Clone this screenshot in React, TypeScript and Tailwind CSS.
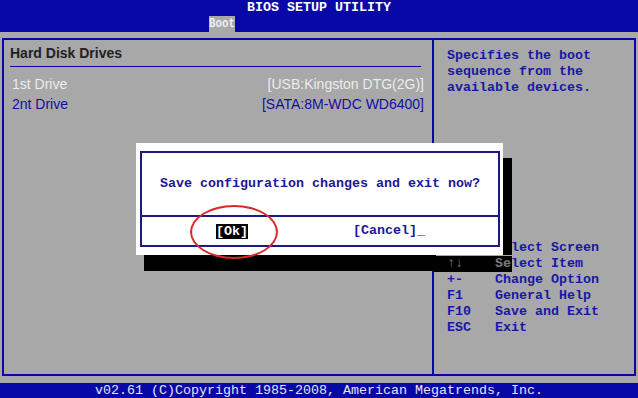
import React from "react";

const mono = "font-['Liberation_Mono','DejaVu_Sans_Mono',monospace] text-[13.33px] leading-[16px] font-bold";
const sans = "font-['Liberation_Sans','Arial',sans-serif]";

const keys = [
  { k: "←→", d: "Select Screen" },
  { k: "+-", d: "Change Option" },
  { k: "F1", d: "General Help" },
  { k: "F10", d: "Save and Exit" },
  { k: "ESC", d: "Exit" },
];

export default function App() {
  return (
    <div className="relative w-[638px] h-[398px] overflow-hidden bg-[#a8a8a8]">
      {/* Title bar */}
      <div className="h-[32px] bg-[#0808a8] flex flex-col">
        <div className={`${mono} h-[16px] text-white text-center`}>BIOS SETUP UTILITY</div>
        <div className="ml-[209px] h-[16px] w-[26px] overflow-hidden bg-[#a8a8a8] flex">
          <span className={`${mono} block scale-x-[0.81] origin-left text-[#eeeeff]`}>Boot</span>
        </div>
      </div>

      {/* Main area */}
      <div className="h-[351px] pt-[6px] px-[2px]">
        <div className="h-[338px] border-2 border-[#0808a8] flex">
          {/* Left panel */}
          <div className="w-[430px] border-r-2 border-[#0808a8] pl-[6px] pr-[8px] pt-[3px]">
            <div className={`${sans} text-[14px] font-bold text-[#222222] h-[20px] leading-[20px]`}>Hard Disk Drives</div>
            <div className="mt-[3px] mr-[3px] h-[1px] bg-[#0808a8]" />
            <div className={`${sans} text-[14px] mt-[7px] flex justify-between text-[#ececec] leading-[20px] pl-[2px]`}>
              <span>1st Drive</span>
              <span>[USB:Kingston DTG(2G)]</span>
            </div>
            <div className={`${sans} text-[14px] flex justify-between text-[#1010a0] leading-[20px] pl-[2px]`}>
              <span>2nt Drive</span>
              <span>[SATA:8M-WDC WD6400]</span>
            </div>
          </div>

          {/* Right panel */}
          <div className={`flex-1 pt-[8px] flex flex-col ${mono} text-[#1818a0]`}>
            <div className="pl-[13px]">Specifies the boot</div>
            <div className="pl-[13px]">sequence from the</div>
            <div className="pl-[13px]">available devices.</div>
            <div className="mt-[144px]">
              <div className="flex pl-[13px]">
                <span className="w-[48px]">{keys[0].k}</span>
                <span>{keys[0].d}</span>
              </div>
              {/* row under the dialog shadow */}
              <div className="flex">
                <span className="w-[61px] pl-[13px] bg-black text-[#7a7a7a]">↑↓</span>
                <span className="w-[17px] bg-black text-[#7a7a7a]">Se</span>
                <span className="-ml-[1px]">lect Item</span>
              </div>
              {keys.slice(1).map((r) => (
                <div key={r.k} className="flex pl-[13px]">
                  <span className="w-[48px]">{r.k}</span>
                  <span>{r.d}</span>
                </div>
              ))}
            </div>
          </div>
        </div>
      </div>

      {/* Footer */}
      <div className={`h-[15px] bg-[#0808a8] text-center ${mono} font-normal leading-[15px] text-[#e4e4f0]`}>
        v02.61 (C)Copyright 1985-2008, American Megatrends, Inc.
      </div>

      {/* Dialog shadow */}
      <div className="absolute left-[144px] top-[255px] w-[292px] h-[16px] bg-black" />
      <div className="absolute left-[503px] top-[158px] w-[9px] h-[97px] bg-black" />

      {/* Dialog */}
      <div className="absolute left-[136px] top-[143px] w-[367px] h-[112px] bg-white pt-[8px] pl-[4px]">
        <div className="w-[360px] h-[96px] border-2 border-[#1a1a80] flex flex-col">
          <div className={`h-[62px] flex items-center justify-center ${mono} text-[#1818a0]`}>
            Save configuration changes and exit now?
          </div>
          <div className="h-[2px] bg-[#1a1a80]" />
          <div className={`flex-1 flex items-center ${mono} text-[#1818a0]`}>
            <span className="ml-[74px] bg-black text-white h-[15px] leading-[15px]">[Ok]</span>
            <span className="ml-[105px]">[Cancel]_</span>
          </div>
        </div>
      </div>

      {/* Red marker circle */}
      <div className="absolute left-[190px] top-[205px] w-[88px] h-[54px] rounded-[50%] border-2 border-[#d82a2a]" />
    </div>
  );
}
